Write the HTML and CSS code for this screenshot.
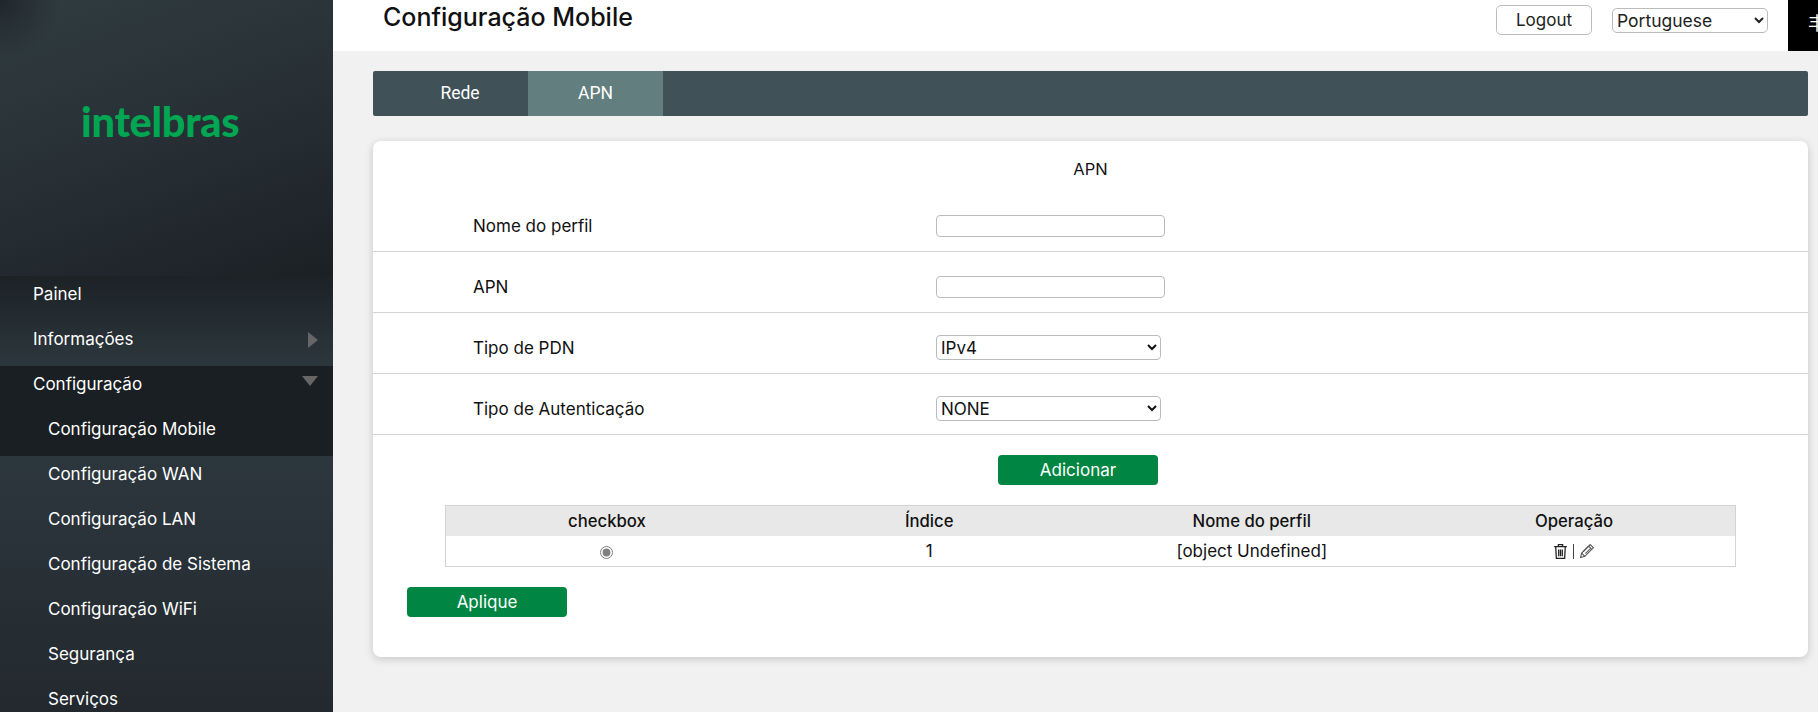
FILE: index.html
```html
<!DOCTYPE html>
<html lang="pt">
<head>
    <meta charset="UTF-8">
    <meta name="viewport" content="width=device-width, initial-scale=1.0">
    <title>Configuração Mobile</title>
    <link rel="stylesheet" href="styles.css">
</head>
<body>
    <div class="app">
        <aside class="sidebar">
            <div class="logo-box"><span class="logo">intelbras</span></div>
            <ul class="menu">
                <li class="menu-item">Painel</li>
                <li class="menu-item">Informações<span class="arrow-right"></span></li>
                <li class="menu-item darker">Configuração<span class="arrow-down"></span></li>
                <li class="menu-item sub darker">Configuração Mobile</li>
                <li class="menu-item sub">Configuração WAN</li>
                <li class="menu-item sub">Configuração LAN</li>
                <li class="menu-item sub">Configuração de Sistema</li>
                <li class="menu-item sub">Configuração WiFi</li>
                <li class="menu-item sub">Segurança</li>
                <li class="menu-item sub">Serviços</li>
            </ul>
        </aside>

        <main class="content">
            <header class="topbar">
                <h1 class="page-title">Configuração Mobile</h1>
                <button class="logout-btn">Logout</button>
                <select class="lang-select">
                    <option>Portuguese</option>
                </select>
                <div class="black-box"><span>丰</span></div>
            </header>

            <nav class="tabs">
                <a class="tab tab-rede">Rede</a>
                <a class="tab tab-apn active">APN</a>
            </nav>

            <section class="card">
                <div class="card-title">APN</div>
                <div class="form-row">
                    <label>Nome do perfil</label>
                    <input type="text" class="field">
                </div>
                <div class="form-row">
                    <label>APN</label>
                    <input type="text" class="field">
                </div>
                <div class="form-row">
                    <label>Tipo de PDN</label>
                    <select class="field-select"><option>IPv4</option></select>
                </div>
                <div class="form-row">
                    <label>Tipo de Autenticação</label>
                    <select class="field-select"><option>NONE</option></select>
                </div>

                <div class="add-row"><button class="green-btn">Adicionar</button></div>

                <table class="apn-table">
                    <thead>
                        <tr>
                            <th>checkbox</th>
                            <th>Índice</th>
                            <th>Nome do perfil</th>
                            <th>Operação</th>
                        </tr>
                    </thead>
                    <tbody>
                        <tr>
                            <td><input type="radio" class="row-radio" checked></td>
                            <td>1</td>
                            <td>[object Undefined]</td>
                            <td>
                                <div class="ops">
                                    <svg width="15" height="17" viewBox="0 0 14 16" fill="none" stroke="#222" stroke-width="1.2">
                                        <path d="M1 3.5h12M5 3.5V1.5h4v2M2.5 3.5l.6 11h7.8l.6-11"/>
                                        <path d="M5.3 6v6.5M7 6v6.5M8.7 6v6.5"/>
                                    </svg>
                                    <span class="ops-sep"></span>
                                    <svg width="16" height="16" viewBox="0 0 15 15" fill="none" stroke="#555" stroke-width="1">
                                        <path d="M1.5 13.5l1-4L10.5 1.5l3 3-8 8z"/>
                                        <path d="M2.5 9.5l3 3M9 3l3 3M4 8l5-5M6 10l5-5"/>
                                    </svg>
                                </div>
                            </td>
                        </tr>
                    </tbody>
                </table>

                <div class="apply-row"><button class="green-btn">Aplique</button></div>
            </section>
        </main>
    </div>
</body>
</html>
```

FILE: styles.css
```css
html, body { height: 100%; }
body { margin: 0; background: #f1f1f1; font-family: Inter, "Noto Sans", sans-serif; color: #111; overflow: hidden; }
.app { display: flex; height: 712px; overflow: hidden; }

.sidebar { width: 333px; flex-shrink: 0; color: #fff; }
.logo-box { height: 276px; box-sizing: border-box; padding: 96px 0 0 81px; background: radial-gradient(circle at 0 0, #20272b 0, rgba(32, 39, 43, 0) 60px), linear-gradient(160deg, #303c41 0%, #262e34 55%, #1b2024 100%); }
.logo { display: block; font-family: Lato, sans-serif; font-weight: 900; font-size: 41.5px; line-height: 50px; letter-spacing: -0.3px; color: #00a651; }

.menu { list-style: none; margin: 0; padding: 0; background: linear-gradient(180deg, #1c2226 0, #2c373d 90px, #2c373d 180px, #22282e 100%); }
.menu-item { display: flex; justify-content: space-between; height: 45px; box-sizing: border-box; padding: 8px 15px 0 33px; font-size: 17px; line-height: 21px; }
.menu-item.sub { padding-left: 48px; }
.menu-item.darker { background: #1a1f23; }
.arrow-right { width: 0; height: 0; margin-top: 3px; border-left: 10px solid #666; border-top: 8px solid transparent; border-bottom: 8px solid transparent; }
.arrow-down { width: 0; height: 0; margin-top: 2px; border-top: 10px solid #666; border-left: 8px solid transparent; border-right: 8px solid transparent; }

.content { flex: 1; min-width: 0; }
.topbar { display: flex; align-items: flex-start; height: 51px; background: #fff; padding-left: 50px; }
.page-title { flex: 1; margin: 0; font-size: 25px; font-weight: 500; line-height: 34px; }
.logout-btn { width: 96px; height: 30px; margin-top: 5px; background: #fff; border: 1px solid #bbb; border-radius: 5px; font-family: inherit; font-size: 17px; color: #222; }
.lang-select { width: 156px; height: 25px; margin: 8px 20px 0 20px; background: #fff; border: 1px solid #bbb; border-radius: 5px; font-family: inherit; font-size: 17.5px; color: #222; }
.black-box { width: 30px; height: 51px; background: #000; color: #fff; overflow: hidden; font-family: "Noto Sans CJK SC", sans-serif; font-size: 18px; line-height: 44px; padding-left: 20px; box-sizing: border-box; white-space: nowrap; }

.tabs { display: flex; height: 45px; margin: 20px 10px 0 40px; background: #415158; border-radius: 2px; }
.tab { display: block; box-sizing: border-box; color: #fff; font-family: Roboto, sans-serif; font-size: 17.5px; line-height: 45px; text-align: center; }
.tab-rede { width: 155px; padding-left: 19px; }
.tab-apn { width: 135px; }
.tab.active { background: #627e7f; }

.card { margin: 25px 10px 0 40px; height: 516px; box-sizing: border-box; background: #fff; border-radius: 8px; box-shadow: 0 2px 8px rgba(0, 0, 0, 0.18); font-size: 17px; }
.card-title { padding-top: 17px; height: 50px; box-sizing: border-box; text-align: center; font-size: 16.5px; line-height: 22px; }
.form-row { display: flex; align-items: center; height: 61px; box-sizing: border-box; border-bottom: 1px solid #d3d3d3; padding: 9px 0 0 100px; }
.form-row label { width: 463px; }
.field { width: 229px; height: 22px; box-sizing: border-box; border: 1px solid #bbb; border-radius: 4px; background: #fff; }
.field-select { width: 225px; height: 25px; box-sizing: border-box; border: 1px solid #bbb; border-radius: 4px; background: #fff; font-family: inherit; font-size: 17px; color: #111; }

.add-row { display: flex; justify-content: center; padding: 20px 25px 20px 0; }
.green-btn { width: 160px; height: 30px; background: #008542; border: 0; border-radius: 4px; color: #fff; font-family: inherit; font-size: 17px; }

.apn-table { width: 1291px; margin-left: 72px; border-collapse: collapse; table-layout: fixed; border: 1px solid #d3d3d3; }
.apn-table th { height: 30px; padding: 0; background: #e8e8e8; font-weight: 500; font-size: 16.7px; }
.apn-table td { height: 30px; padding: 0; text-align: center; }
.row-radio { margin: 0 2px 0 0; vertical-align: middle; accent-color: #808080; }
.ops { display: flex; justify-content: center; align-items: center; gap: 5px; padding-right: 1px; }
.ops-sep { width: 1px; height: 15px; background: #444; }

.apply-row { padding: 20px 0 0 34px; }
```
